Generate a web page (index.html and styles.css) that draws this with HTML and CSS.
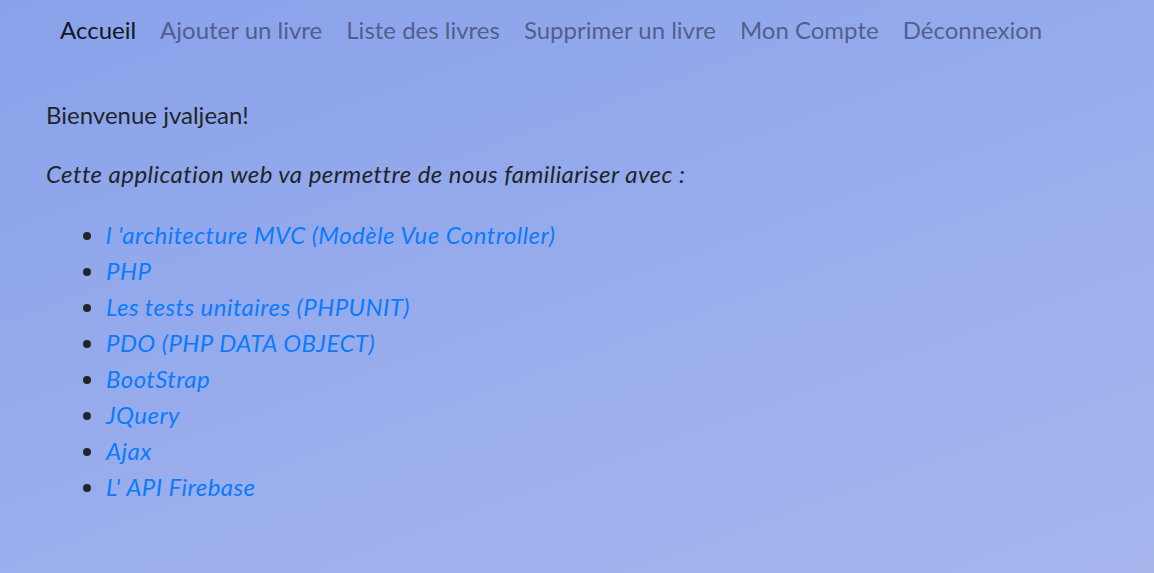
FILE: index.html
```html
<!DOCTYPE html>
<html lang="fr">
<head>
<meta charset="utf-8">
<title>Accueil</title>
<link rel="stylesheet" href="styles.css">
</head>
<body>
<nav class="navbar">
  <a class="nav-link active" href="#">Accueil</a>
  <a class="nav-link" href="#">Ajouter un livre</a>
  <a class="nav-link" href="#">Liste des livres</a>
  <a class="nav-link" href="#">Supprimer un livre</a>
  <a class="nav-link" href="#">Mon Compte</a>
  <a class="nav-link" href="#">Déconnexion</a>
</nav>
<main class="content">
  <p class="welcome">Bienvenue jvaljean!</p>
  <p class="intro">Cette application web va permettre de nous familiariser avec :</p>
  <ul class="topics">
    <li><a href="#">l 'architecture MVC (Modèle Vue Controller)</a></li>
    <li><a href="#">PHP</a></li>
    <li><a href="#">Les tests unitaires (PHPUNIT)</a></li>
    <li><a href="#">PDO (PHP DATA OBJECT)</a></li>
    <li><a href="#">BootStrap</a></li>
    <li><a href="#">JQuery</a></li>
    <li><a href="#">Ajax</a></li>
    <li><a href="#">L' API Firebase</a></li>
  </ul>
</main>
</body>
</html>
```
FILE: styles.css
```css
html, body {
  height: 100%;
}
body {
  margin: 0;
  font-family: Lato, "Open Sans", sans-serif;
  font-size: 24px;
  line-height: 36px;
  color: #212529;
  background: linear-gradient(160deg, #89a2eb 0%, #98acec 50%, #a7b7ee 100%);
}
.navbar {
  display: flex;
  padding: 12px 0 0 48px;
}
.nav-link {
  padding: 0 12px;
  color: rgba(40, 45, 80, 0.62);
  text-decoration: none;
}
.nav-link.active {
  color: #15171f;
}
.content {
  padding: 49px 0 0 46px;
}
.content p {
  margin: 0 0 23px;
}
.content .intro {
  font-style: italic;
  letter-spacing: 0.45px;
  margin-bottom: 25px;
}
.topics {
  margin: 0;
  padding-left: 60px;
}
.topics a {
  color: #0a7bfc;
  font-style: italic;
  letter-spacing: 0.45px;
  text-decoration: none;
}
```
